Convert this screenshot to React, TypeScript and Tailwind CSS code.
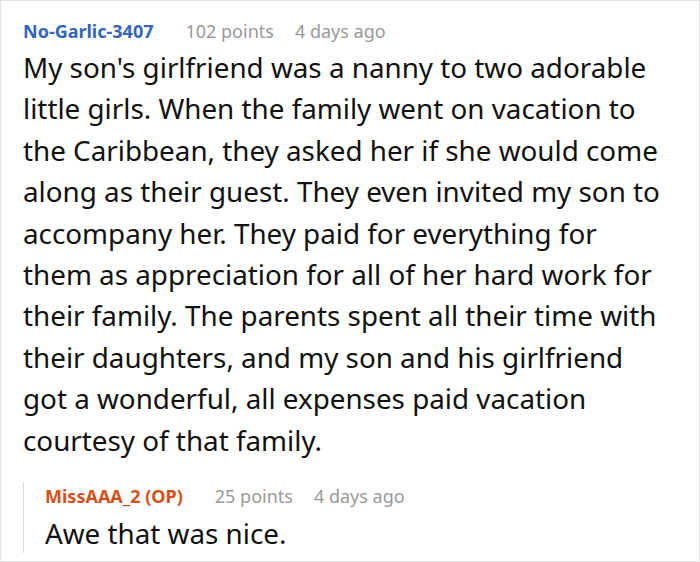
export default function App() {
  return (
    <div className="w-[700px] h-[562px] bg-white border border-[#e2e2e2] font-['Noto_Sans',sans-serif] overflow-hidden">
      <div className="pl-[22px] pr-[30px] pt-[16px]">
        <div className="flex items-baseline text-[18px] leading-[28px]">
          <span className="font-bold text-[#3366b8]">No-Garlic-3407</span>
          <span className="ml-[32px] text-[#999999]">102 points</span>
          <span className="ml-[21px] text-[#999999]">4 days ago</span>
        </div>
        <p className="mt-[2px] text-[27.8px] leading-[41.4px] text-[#111111]">
          My son's girlfriend was a nanny to two adorable little girls. When the family went on vacation to the Caribbean, they asked her if she would come along as their guest. They even invited my son to accompany her. They paid for everything for them as appreciation for all of her hard work for their family. The parents spent all their time with their daughters, and my son and his girlfriend got a wonderful, all expenses paid vacation courtesy of that family.
        </p>
        <div className="mt-[33px] border-l border-[#dddddd] pl-[21px]">
          <div className="-mt-[12px] flex items-baseline text-[18px] leading-[28px]">
            <span className="font-bold text-[#d6501c]">MissAAA_2 (OP)</span>
            <span className="ml-[32px] text-[#999999]">25 points</span>
            <span className="ml-[21px] text-[#999999]">4 days ago</span>
          </div>
          <p className="mt-[3px] -mb-[10px] text-[27.8px] leading-[40px] text-[#111111]">Awe that was nice.</p>
        </div>
      </div>
    </div>
  );
}
